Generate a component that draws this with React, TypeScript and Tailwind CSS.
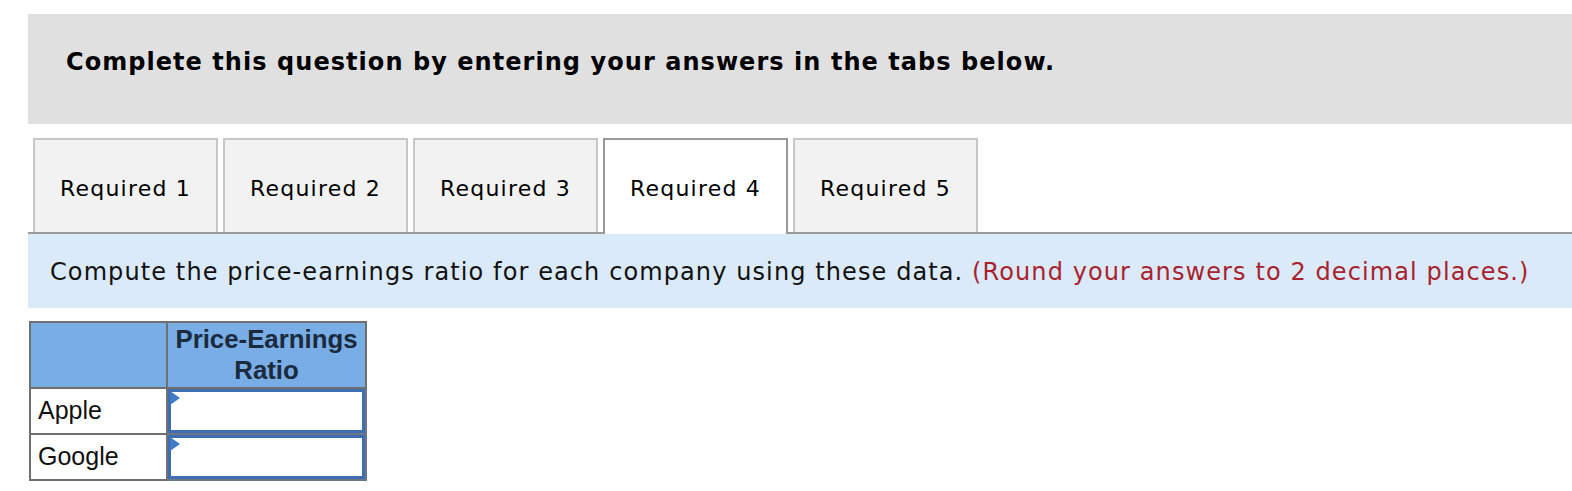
import React from "react";

const tabs = ["Required 1", "Required 2", "Required 3", "Required 4", "Required 5"];

function InputCell() {
  return (
    <td className="border-2 border-[#6b7686] p-0 h-[46px]">
      <div className="relative h-[44px] w-full border-[3px] border-[#3f6db2] bg-white">
        <div className="absolute left-[-1px] top-[-1px] h-0 w-0 border-y-[7px] border-l-[10px] border-y-transparent border-l-[#3f7cc8]" />
      </div>
    </td>
  );
}

export default function App() {
  return (
    <div className="bg-white w-[1572px] h-[491px] overflow-hidden pt-[14px] pl-[28px]">
      <div className="h-[110px] bg-[#e0e0e0] pl-[38px] pt-[34px]">
        <div
          className="text-[24px] font-bold text-black leading-[28px] tracking-[1.05px]"
          style={{ fontFamily: '"DejaVu Sans", Verdana, sans-serif' }}
        >
          Complete this question by entering your answers in the tabs below.
        </div>
      </div>
      <div className="mt-[14px] flex items-start gap-[5px] pl-[5px] border-b-2 border-[#9b9b9b]">
        {tabs.map((t, i) => {
          const active = i === 3;
          return (
            <div
              key={t}
              className={
                active
                  ? "w-[185px] h-[96px] -mb-[2px] pt-[4px] pb-[2px] bg-white border-2 border-b-0 border-[#999999] flex items-center justify-center text-[22px] tracking-[1.2px] text-black"
                  : "w-[185px] h-[94px] pt-[4px] bg-[#f2f2f2] border-2 border-b-0 border-[#c6c6c6] flex items-center justify-center text-[22px] tracking-[1.2px] text-black"
              }
              style={{ fontFamily: '"DejaVu Sans", Verdana, sans-serif' }}
            >
              {t}
            </div>
          );
        })}
      </div>
      <div
        className="h-[74px] bg-[#dbeaf8] flex items-center pl-[22px] pt-[2px] text-[24px] tracking-[1.1px] text-[#111]"
        style={{ fontFamily: '"DejaVu Sans", Verdana, sans-serif' }}
      >
        <span>
          Compute the price-earnings ratio for each company using these data.{" "}
          <span className="text-[#a8222f]">(Round your answers to 2 decimal places.)</span>
        </span>
      </div>
      <table
        className="mt-[13px] ml-[1px] border-collapse border-2 border-[#707070]"
        style={{ fontFamily: '"Liberation Sans", Arial, sans-serif' }}
      >
        <tbody>
          <tr className="h-[66px]">
            <td className="w-[137px] bg-[#79ade5] border-2 border-[#707070] p-0" />
            <td className="w-[199px] bg-[#79ade5] border-2 border-[#707070] p-0 text-center text-[25.8px] font-bold leading-[31px] text-[#1b2a3d]">
              Price-Earnings
              <br />
              Ratio
            </td>
          </tr>
          <tr>
            <td className="border-2 border-[#707070] pl-[7px] text-[25px] text-[#111] h-[46px] p-0">Apple</td>
            <InputCell />
          </tr>
          <tr>
            <td className="border-2 border-[#707070] pl-[7px] text-[25px] text-[#111] h-[46px] p-0">Google</td>
            <InputCell />
          </tr>
        </tbody>
      </table>
    </div>
  );
}
